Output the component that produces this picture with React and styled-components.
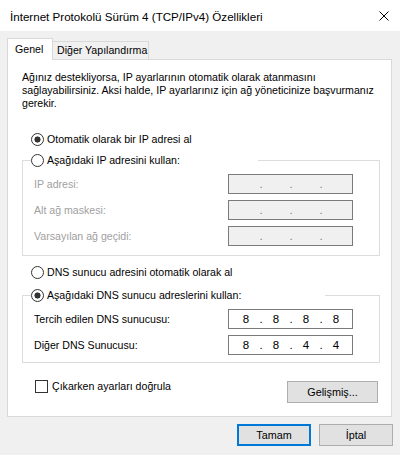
import React from 'react';
import styled, { createGlobalStyle } from 'styled-components';

const GlobalStyle = createGlobalStyle`
  html, body {
    margin: 0;
    padding: 0;
    background: #f0f0f0;
  }
  body {
    font-family: "Liberation Sans", Arial, sans-serif;
    font-size: 10.6px;
    color: #000;
  }
`;

const Window = styled.div`
  width: 400px;
  height: 455px;
  display: flex;
  flex-direction: column;
  background: #f0f0f0;
  overflow: hidden;
`;

const TitleBar = styled.div`
  flex: none;
  height: 31px;
  box-sizing: border-box;
  padding: 0 11px 0 10px;
  background: #fff;
  display: flex;
  align-items: center;
  justify-content: space-between;
`;

const Title = styled.span`
  font-size: 11.6px;
  line-height: 13px;
  margin-top: 1px;
`;

const Body = styled.div`
  padding: 7px 8px 0 7px;
`;

const TabStrip = styled.div`
  display: flex;
  align-items: flex-end;
  height: 22px;
  margin-bottom: -1px;
  position: relative;
  z-index: 1;
`;

const Tab = styled.div`
  box-sizing: border-box;
  height: ${p => (p.$active ? '22px' : '18px')};
  margin-bottom: ${p => (p.$active ? '0' : '1px')};
  width: ${p => p.$w}px;
  border: 1px solid #d9d9d9;
  border-bottom: none;
  border-left: ${p => (p.$active ? '1px solid #d9d9d9' : 'none')};
  background: ${p => (p.$active ? '#fff' : '#f0f0f0')};
  padding-left: ${p => (p.$active ? '7px' : '4px')};
  padding-top: ${p => (p.$active ? '4px' : '2px')};
  line-height: 13px;
  white-space: nowrap;
`;

const Panel = styled.div`
  box-sizing: border-box;
  width: 385px;
  height: 358px;
  border: 1px solid #d9d9d9;
  background: #fff;
  padding: 0 11px 0 14px;
  display: flex;
  flex-direction: column;
`;

const Intro = styled.p`
  margin: 11px 0 0;
  line-height: 13px;
  white-space: nowrap;
`;

const RadioRow = styled.label`
  display: flex;
  align-items: center;
  gap: 3px;
  height: 13px;
  line-height: 13px;
  width: ${p => (p.$w ? `${p.$w}px` : 'auto')};
  padding-left: ${p => p.$indent ?? 9}px;
  margin-top: ${p => p.$mt ?? 0}px;
  white-space: nowrap;
`;

const RadioCircle = styled.span`
  flex: none;
  box-sizing: border-box;
  width: 13px;
  height: 13px;
  border-radius: 50%;
  border: 1px solid #333;
  background: ${p =>
    p.$checked
      ? 'radial-gradient(circle, #333 0 2.8px, #fff 3.3px)'
      : '#fff'};
`;

const Group = styled.fieldset`
  margin: ${p => p.$mt}px 0 0;
  padding: ${p => p.$pt}px 0 ${p => p.$pb}px 0;
  border: 1px solid #dcdcdc;
  min-inline-size: 0;
  display: flex;
  flex-direction: column;
  gap: 6px;
`;

const Legend = styled.legend`
  padding: 0;
  margin-left: 8px;
`;

const FieldRow = styled.div`
  display: grid;
  grid-template-columns: 194px 125px;
  align-items: center;
  height: 20px;
  padding-left: 11px;
`;

const FieldLabel = styled.span`
  color: ${p => (p.$disabled ? '#a0a0a0' : '#000')};
  white-space: nowrap;
`;

const IpBox = styled.div`
  box-sizing: border-box;
  height: 20px;
  border: 1px solid #7a7a7a;
  background: ${p => (p.$disabled ? '#f0f0f0' : '#fff')};
  padding-left: 2px;
  display: flex;
  align-items: center;
`;

const Octet = styled.span`
  width: 30px;
  text-align: center;
  line-height: 18px;
  font-size: 11.5px;
`;

const Sep = styled.span`
  width: 0;
  display: flex;
  justify-content: center;
  line-height: 18px;
  font-size: 11.5px;
  color: ${p => (p.$disabled ? '#7a7a90' : '#000')};
`;

const BottomRow = styled.div`
  display: flex;
  justify-content: space-between;
  align-items: flex-start;
  margin-top: 16px;
`;

const CheckRow = styled.label`
  display: flex;
  align-items: center;
  gap: 4px;
  padding-left: 13px;
  height: 13px;
  line-height: 13px;
  margin-top: 1px;
`;

const CheckBox = styled.span`
  flex: none;
  box-sizing: border-box;
  width: 13px;
  height: 13px;
  border: 1px solid #333;
  background: #fff;
`;

const Button = styled.button`
  box-sizing: border-box;
  width: ${p => p.$w}px;
  height: 22px;
  margin: ${p => p.$m || 0};
  padding: 0;
  font-family: inherit;
  font-size: 10.8px;
  color: #000;
  background: #e1e1e1;
  border: ${p => (p.$default ? '2px solid #0078d7' : '1px solid #adadad')};
`;

const Footer = styled.div`
  display: flex;
  justify-content: flex-end;
  gap: 8px;
  margin: 7px -1px 0 0;
`;

const CloseIcon = () => (
  <svg width="10" height="10" viewBox="0 0 10 10">
    <path d="M0.5 0.5 L9.5 9.5 M9.5 0.5 L0.5 9.5" stroke="#000" strokeWidth="1" />
  </svg>
);

const IpField = ({ values, disabled }) => (
  <IpBox $disabled={disabled}>
    {[0, 1, 2, 3].map(i => (
      <React.Fragment key={i}>
        {i > 0 && <Sep $disabled={disabled}>.</Sep>}
        <Octet>{values ? values[i] : ''}</Octet>
      </React.Fragment>
    ))}
  </IpBox>
);

const ipRows = ['IP adresi:', 'Alt ağ maskesi:', 'Varsayılan ağ geçidi:'];

const dnsRows = [
  { label: 'Tercih edilen DNS sunucusu:', values: ['8', '8', '8', '8'] },
  { label: 'Diğer DNS Sunucusu:', values: ['8', '8', '4', '4'] },
];

export default function App() {
  return (
    <>
      <GlobalStyle />
      <Window>
        <TitleBar>
          <Title>İnternet Protokolü Sürüm 4 (TCP/IPv4) Özellikleri</Title>
          <CloseIcon />
        </TitleBar>
        <Body>
          <TabStrip>
            <Tab $active $w={46}>Genel</Tab>
            <Tab $w={96}>Diğer Yapılandırma</Tab>
          </TabStrip>
          <Panel>
            <Intro>
              Ağınız destekliyorsa, IP ayarlarının otomatik olarak atanmasını
              <br />
              sağlayabilirsiniz. Aksi halde, IP ayarlarınız için ağ yöneticinize başvurmanız
              <br />
              gerekir.
            </Intro>

            <RadioRow $mt={23}>
              <RadioCircle $checked />
              Otomatik olarak bir IP adresi al
            </RadioRow>

            <Group $mt={8} $pt={7} $pb={9}>
              <Legend>
                <RadioRow $indent={0} $w={227}>
                  <RadioCircle />
                  Aşağıdaki IP adresini kullan:
                </RadioRow>
              </Legend>
              {ipRows.map(label => (
                <FieldRow key={label}>
                  <FieldLabel $disabled>{label}</FieldLabel>
                  <IpField disabled />
                </FieldRow>
              ))}
            </Group>

            <RadioRow $mt={10}>
              <RadioCircle />
              DNS sunucu adresini otomatik olarak al
            </RadioRow>

            <Group $mt={10} $pt={7} $pb={7}>
              <Legend>
                <RadioRow $indent={0} $w={294}>
                  <RadioCircle $checked />
                  Aşağıdaki DNS sunucu adreslerini kullan:
                </RadioRow>
              </Legend>
              {dnsRows.map(row => (
                <FieldRow key={row.label}>
                  <FieldLabel>{row.label}</FieldLabel>
                  <IpField values={row.values} />
                </FieldRow>
              ))}
            </Group>

            <BottomRow>
              <CheckRow>
                <CheckBox />
                Çıkarken ayarları doğrula
              </CheckRow>
              <Button $w={91} $m="2px 2px 0 0">Gelişmiş...</Button>
            </BottomRow>
          </Panel>
          <Footer>
            <Button $w={74} $default>Tamam</Button>
            <Button $w={74}>İptal</Button>
          </Footer>
        </Body>
      </Window>
    </>
  );
}
